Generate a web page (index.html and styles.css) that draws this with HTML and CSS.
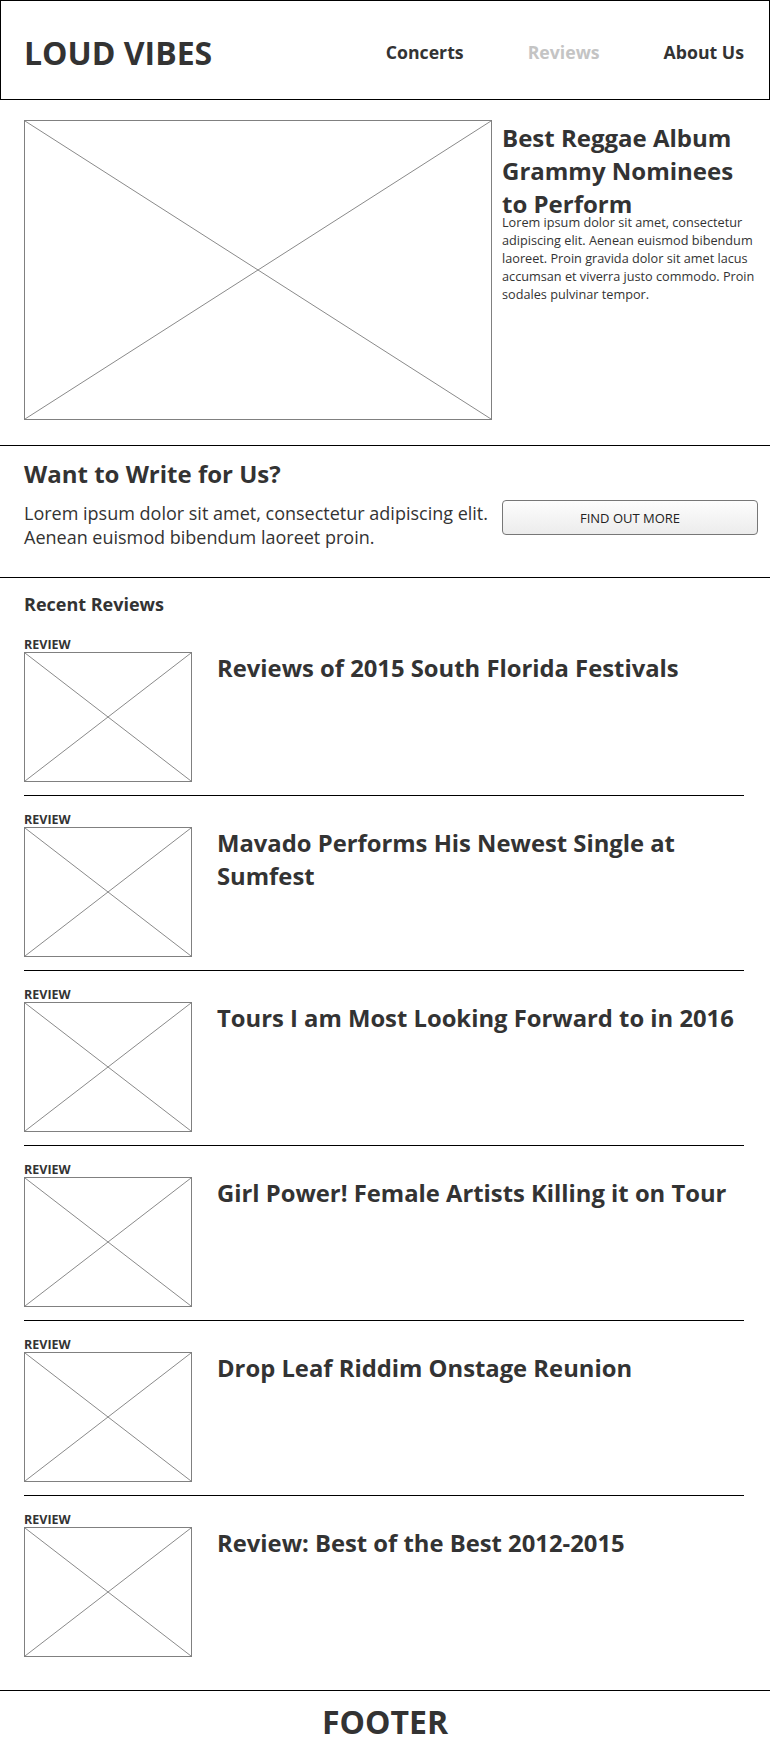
FILE: index.html
```html
<!DOCTYPE html>
<html lang="en">
<head>
<meta charset="utf-8">
<title>Loud Vibes</title>
<link rel="stylesheet" href="styles.css">
</head>
<body>
<header class="site-header">
  <div class="logo">LOUD VIBES</div>
  <nav class="nav">
    <a class="nav-link" href="#">Concerts</a>
    <a class="nav-link is-active" href="#">Reviews</a>
    <a class="nav-link" href="#">About Us</a>
  </nav>
</header>

<section class="hero">
  <div class="ph hero-img">
    <svg viewBox="0 0 100 100" preserveAspectRatio="none"><line x1="0" y1="0" x2="100" y2="100"/><line x1="100" y1="0" x2="0" y2="100"/></svg>
  </div>
  <div class="hero-text">
    <h1 class="hero-title">Best Reggae Album Grammy Nominees to Perform</h1>
    <p class="hero-copy">Lorem ipsum dolor sit amet, consectetur adipiscing elit. Aenean euismod bibendum laoreet. Proin gravida dolor sit amet lacus accumsan et viverra justo commodo. Proin sodales pulvinar tempor.</p>
  </div>
</section>

<section class="cta">
  <h2 class="cta-title">Want to Write for Us?</h2>
  <div class="cta-row">
    <p class="cta-copy">Lorem ipsum dolor sit amet, consectetur adipiscing elit. Aenean euismod bibendum laoreet proin.</p>
    <button class="btn" type="button">FIND OUT MORE</button>
  </div>
</section>

<section class="recent">
  <h3 class="recent-title">Recent Reviews</h3>
  <article class="review">
    <div class="review-label">REVIEW</div>
    <div class="review-body">
      <div class="ph thumb"><svg viewBox="0 0 100 100" preserveAspectRatio="none"><line x1="0" y1="0" x2="100" y2="100"/><line x1="100" y1="0" x2="0" y2="100"/></svg></div>
      <h4 class="review-title">Reviews of 2015 South Florida Festivals</h4>
    </div>
  </article>
  <article class="review">
    <div class="review-label">REVIEW</div>
    <div class="review-body">
      <div class="ph thumb"><svg viewBox="0 0 100 100" preserveAspectRatio="none"><line x1="0" y1="0" x2="100" y2="100"/><line x1="100" y1="0" x2="0" y2="100"/></svg></div>
      <h4 class="review-title">Mavado Performs His Newest Single at Sumfest</h4>
    </div>
  </article>
  <article class="review">
    <div class="review-label">REVIEW</div>
    <div class="review-body">
      <div class="ph thumb"><svg viewBox="0 0 100 100" preserveAspectRatio="none"><line x1="0" y1="0" x2="100" y2="100"/><line x1="100" y1="0" x2="0" y2="100"/></svg></div>
      <h4 class="review-title">Tours I am Most Looking Forward to in 2016</h4>
    </div>
  </article>
  <article class="review">
    <div class="review-label">REVIEW</div>
    <div class="review-body">
      <div class="ph thumb"><svg viewBox="0 0 100 100" preserveAspectRatio="none"><line x1="0" y1="0" x2="100" y2="100"/><line x1="100" y1="0" x2="0" y2="100"/></svg></div>
      <h4 class="review-title">Girl Power! Female Artists Killing it on Tour</h4>
    </div>
  </article>
  <article class="review">
    <div class="review-label">REVIEW</div>
    <div class="review-body">
      <div class="ph thumb"><svg viewBox="0 0 100 100" preserveAspectRatio="none"><line x1="0" y1="0" x2="100" y2="100"/><line x1="100" y1="0" x2="0" y2="100"/></svg></div>
      <h4 class="review-title">Drop Leaf Riddim Onstage Reunion</h4>
    </div>
  </article>
  <article class="review">
    <div class="review-label">REVIEW</div>
    <div class="review-body">
      <div class="ph thumb"><svg viewBox="0 0 100 100" preserveAspectRatio="none"><line x1="0" y1="0" x2="100" y2="100"/><line x1="100" y1="0" x2="0" y2="100"/></svg></div>
      <h4 class="review-title">Review: Best of the Best 2012-2015</h4>
    </div>
  </article>
</section>

<footer class="site-footer">FOOTER</footer>
</body>
</html>
```

FILE: styles.css
```css
* { box-sizing: border-box; }

html, body {
  margin: 0;
  padding: 0;
  background: #fff;
}

body {
  font-family: "Open Sans", "Noto Sans", sans-serif;
  color: #333;
}

/* Header */
.site-header {
  height: 100px;
  border: 1px solid #000;
  display: flex;
  align-items: center;
  justify-content: space-between;
  padding: 0 25px 0 23px;
}

.logo {
  font-size: 32px;
  font-weight: 700;
  line-height: 40px;
  padding-top: 6px;
}

.nav {
  display: flex;
  gap: 64px;
  padding-top: 4px;
}

.nav-link {
  font-size: 17.7px;
  font-weight: 700;
  line-height: 24px;
  color: #333;
  text-decoration: none;
}

.nav-link.is-active { color: #c4c4c4; }

/* Placeholder images */
.ph {
  border: 1px solid #808080;
  background: #fff;
}

.ph svg {
  display: block;
  width: 100%;
  height: 100%;
}

.ph line {
  stroke: #8a8a8a;
  stroke-width: 1;
  vector-effect: non-scaling-stroke;
}

/* Hero */
.hero {
  display: grid;
  grid-template-columns: 468px 256px;
  column-gap: 10px;
  padding: 20px 12px 25px 24px;
  border-bottom: 1px solid #000;
}

.hero-img { height: 300px; }

.hero-title {
  margin: 1px 0 0;
  font-size: 24px;
  font-weight: 700;
  line-height: 33px;
}

.hero-copy {
  margin: -7px 0 0;
  font-size: 12.7px;
  line-height: 18px;
}

/* CTA */
.cta {
  padding: 12px 12px 28px 24px;
  border-bottom: 1px solid #000;
}

.cta-title {
  margin: 0 0 10px;
  font-size: 24px;
  font-weight: 700;
  line-height: 32px;
}

.cta-row {
  display: grid;
  grid-template-columns: 468px 256px;
  column-gap: 10px;
  align-items: start;
}

.cta-copy {
  margin: 1px 0 0;
  font-size: 18px;
  line-height: 24px;
}

.btn {
  height: 35px;
  border: 1px solid #777;
  border-radius: 4px;
  background: linear-gradient(#fdfdfd, #ececec);
  font-family: "Open Sans", "Noto Sans", sans-serif;
  font-size: 13px;
  color: #222;
  padding: 0;
}

/* Recent reviews */
.recent {
  padding: 14px 26px 20px 24px;
}

.recent-title {
  margin: 0 0 5px;
  font-size: 18px;
  font-weight: 700;
  line-height: 24px;
}

.review {
  padding: 16px 0 13px;
  border-bottom: 1px solid #000;
}

.review:last-child { border-bottom: 0; }

.review-label {
  font-size: 12.5px;
  font-weight: 700;
  line-height: 15px;
}

.review-body {
  display: flex;
  align-items: flex-start;
  gap: 25px;
}

.thumb {
  width: 168px;
  height: 130px;
  flex: none;
}

.review-title {
  margin: 0;
  font-size: 23.8px;
  font-weight: 700;
  line-height: 33px;
}

/* Footer */
.site-footer {
  border-top: 1px solid #000;
  padding-top: 11px;
  text-align: center;
  font-size: 32px;
  font-weight: 700;
  line-height: 40px;
}
```
